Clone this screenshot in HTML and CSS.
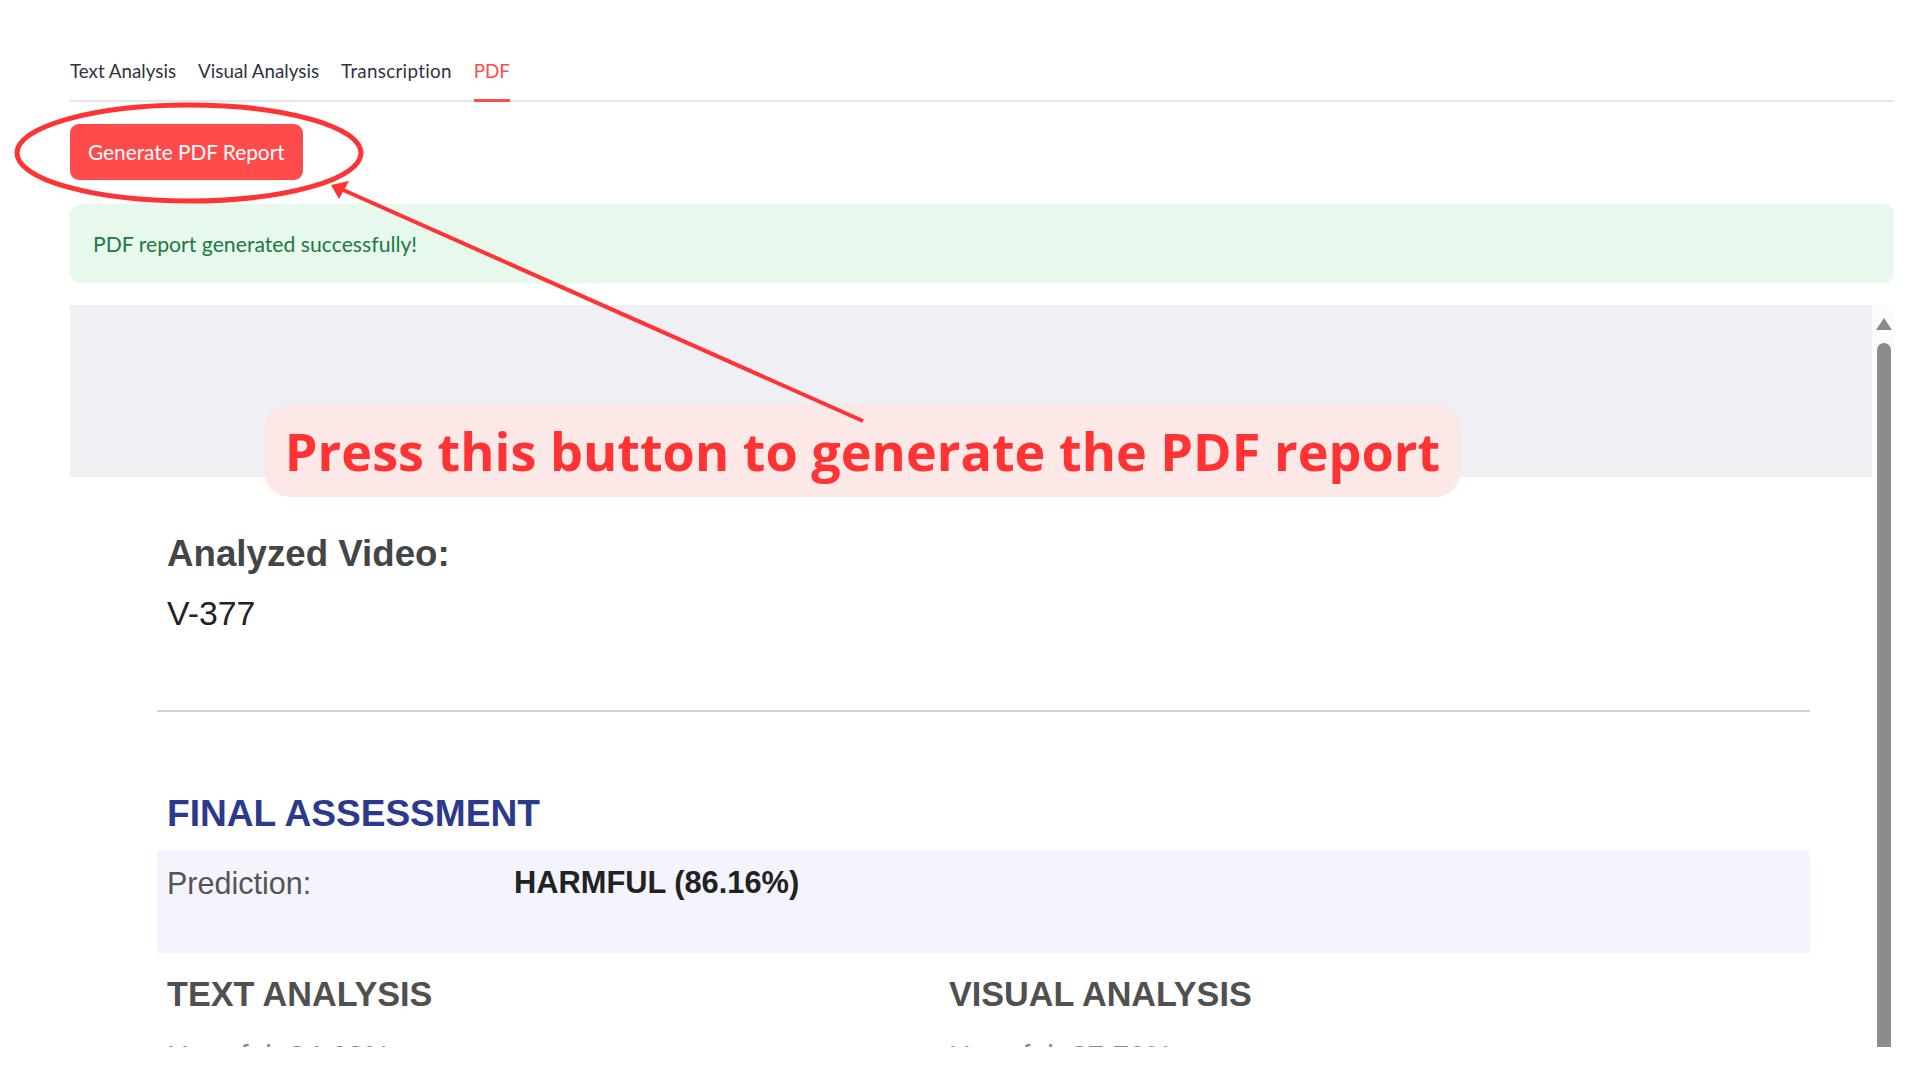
FILE: index.html
```html
<!DOCTYPE html>
<html lang="en">
<head>
<meta charset="utf-8">
<title>PDF Report</title>
<link rel="stylesheet" href="styles.css">
</head>
<body>
<div class="app">
  <nav class="tabs">
    <span class="tab">Text Analysis</span>
    <span class="tab">Visual Analysis</span>
    <span class="tab tab-wide">Transcription</span>
    <span class="tab active">PDF</span>
  </nav>
  <button class="btn-primary">Generate PDF Report</button>
  <div class="alert-success">PDF report generated successfully!</div>
  <div class="pdf-frame">
    <div class="pdf-viewport">
      <div class="pdf-toolbar"></div>
      <div class="pdf-page">
        <h2 class="label">Analyzed Video:</h2>
        <p class="video-id">V-377</p>
        <hr class="rule">
        <h2 class="section-title">FINAL ASSESSMENT</h2>
        <div class="prediction">
          <span class="pred-label">Prediction:</span>
          <span class="pred-value">HARMFUL (86.16%)</span>
        </div>
        <div class="columns">
          <div class="col">
            <h3 class="col-title">TEXT ANALYSIS</h3>
            <p class="metric">Harmful: 84.62%</p>
          </div>
          <div class="col">
            <h3 class="col-title">VISUAL ANALYSIS</h3>
            <p class="metric">Harmful: 87.70%</p>
          </div>
        </div>
      </div>
    </div>
    <div class="scrollbar">
      <span class="scroll-up"></span>
      <span class="scroll-thumb"></span>
    </div>
  </div>
</div>

<div class="callout">Press this button to generate the PDF report</div>

<svg class="annotations" width="1920" height="1080" viewBox="0 0 1920 1080">
  <ellipse cx="189" cy="153" rx="172" ry="48" fill="none" stroke="#ff3333" stroke-width="5"/>
  <line x1="863" y1="421" x2="341" y2="189" stroke="#ff3333" stroke-width="4"/>
  <polygon points="331,185 349,181 339,199" fill="#ff3333"/>
</svg>
</body>
</html>
```
FILE: styles.css
```css
* { box-sizing: border-box; }

html, body {
  margin: 0;
  padding: 0;
  background: #ffffff;
}

body {
  width: 1920px;
  height: 1080px;
  overflow: hidden;
  position: relative;
  font-family: Lato, "Noto Sans", sans-serif;
  color: #31333f;
}

.app {
  padding: 59px 26px 0 70px;
  display: flex;
  flex-direction: column;
  align-items: flex-start;
}

.tabs {
  align-self: stretch;
  display: flex;
  gap: 22px;
  border-bottom: 2px solid #e6e6ea;
}

.tab {
  font-size: 18.8px;
  line-height: 24px;
  padding-bottom: 16px;
  border-bottom: 3px solid transparent;
  margin-bottom: -2px;
  color: #31333f;
}

.tab-wide {
  letter-spacing: 0.3px;
}

.tab.active {
  color: #ff4b4b;
  border-bottom-color: #ff4b4b;
}

.btn-primary {
  margin-top: 22px;
  height: 56px;
  padding: 0 18px;
  border: none;
  border-radius: 9px;
  background: #ff4b4b;
  color: #ffffff;
  font-family: Lato, "Noto Sans", sans-serif;
  font-size: 20.8px;
  line-height: 24px;
}

.alert-success {
  align-self: stretch;
  margin-top: 24px;
  height: 79px;
  display: flex;
  align-items: center;
  padding: 0 23px;
  border-radius: 10px;
  background: #e7f8ec;
  color: #1b7a3e;
  font-size: 21.2px;
}

.pdf-frame {
  align-self: stretch;
  margin-top: 22px;
  height: 742px;
  display: flex;
  margin-right: -1px;
}

.pdf-viewport {
  flex: 1;
  overflow: hidden;
  background: #ffffff;
  font-family: "Liberation Sans", Arial, sans-serif;
}

.pdf-toolbar {
  height: 172px;
  background: #f0eff4;
}

.pdf-page {
  padding: 55px 62px 0 87px;
}

.label {
  margin: 0;
  padding-left: 10px;
  font-size: 36.7px;
  line-height: 44px;
  font-weight: 700;
  color: #454545;
}

.video-id {
  margin: 16px 0 0;
  padding-left: 10px;
  font-size: 33.8px;
  line-height: 42px;
  color: #222222;
}

.rule {
  margin: 76px 0 0;
  border: none;
  height: 2px;
  background: #d2d2d2;
}

.section-title {
  margin: 79px 0 0;
  padding-left: 10px;
  font-size: 37.1px;
  line-height: 44px;
  font-weight: 700;
  color: #2c3a8e;
}

.prediction {
  margin-top: 15px;
  height: 103px;
  padding: 15px 10px 0;
  display: grid;
  grid-template-columns: 347px 1fr;
  align-items: start;
  background: #f4f4fe;
  font-size: 30.5px;
  line-height: 36px;
}

.pred-label { color: #555555; }
.pred-value { color: #222222; font-weight: 700; font-size: 30.8px; }

.columns {
  margin-top: 21px;
  display: grid;
  grid-template-columns: 782px 1fr;
}

.col { padding-left: 10px; }

.col-title {
  margin: 0;
  font-size: 34.2px;
  line-height: 40px;
  font-weight: 700;
  color: #505050;
}

.metric {
  margin: 24px 0 0;
  font-size: 30px;
  line-height: 36px;
  color: #888888;
}

.scrollbar {
  width: 23px;
  background: #fcfcfc;
  display: flex;
  flex-direction: column;
  align-items: center;
  padding-top: 13px;
}

.scroll-up {
  width: 0;
  height: 0;
  border-left: 8px solid transparent;
  border-right: 8px solid transparent;
  border-bottom: 12px solid #8a8a8a;
}

.scroll-thumb {
  margin-top: 13px;
  width: 14px;
  flex: 1;
  border-radius: 7px 7px 0 0;
  background: #8c8c8c;
}

.callout {
  position: absolute;
  left: 264px;
  top: 404px;
  width: 1197px;
  height: 93px;
  border-radius: 26px;
  background: #fde8e8;
  display: flex;
  align-items: center;
  justify-content: center;
  color: #ff3333;
  font-family: "Open Sans", "Noto Sans", sans-serif;
  font-weight: 700;
  font-size: 52.2px;
  line-height: 60px;
  white-space: nowrap;
}

.annotations {
  position: absolute;
  left: 0;
  top: 0;
  pointer-events: none;
}
```
